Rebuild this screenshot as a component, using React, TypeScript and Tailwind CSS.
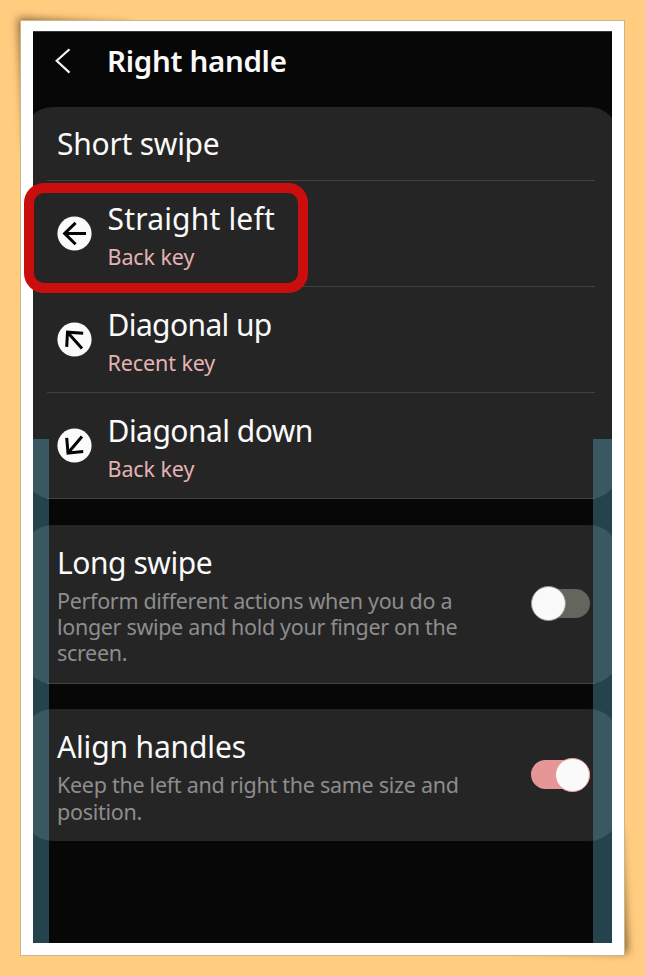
import React, { useState } from 'react';
import clsx from 'clsx';

type Direction = 'left' | 'up' | 'down';

interface SwipeAction {
  direction: Direction;
  title: string;
  action: string;
  titleClass: string;
}

const swipeActions: SwipeAction[] = [
  { direction: 'left', title: 'Straight left', action: 'Back key', titleClass: 'tracking-[0.18px]' },
  { direction: 'up', title: 'Diagonal up', action: 'Recent key', titleClass: 'tracking-[-0.62px]' },
  { direction: 'down', title: 'Diagonal down', action: 'Back key', titleClass: 'tracking-[-0.52px]' },
];

const arrowPaths: Record<Direction, string> = {
  left: 'M29 17.4H8M18.6 6.8L7.6 17.4L18.6 28.2',
  up: 'M25 26.4L10.5 10.2M26.2 11.2L10.5 10.2L9.7 24.8',
  down: 'M25 8.5L11 25M9.7 9.8L11 25L26.2 23.4',
};

const DirectionIcon: React.FC<{ direction: Direction }> = ({ direction }) => (
  <svg width="35" height="35" viewBox="0 0 35 35" className="mt-[35px] shrink-0">
    <circle cx="17.5" cy="17.5" r="17.1" fill="#fbfbfb" />
    <path d={arrowPaths[direction]} fill="none" stroke="#050505" strokeWidth="3" />
  </svg>
);

const Card: React.FC<{ children: React.ReactNode; className?: string }> = ({ children, className }) => (
  <section className={clsx('-ml-[10px] -mr-[7px] rounded-[30px] bg-[#252525] pl-[34px] pr-[28px]', className)}>
    {children}
  </section>
);

const Divider = () => <div className="-ml-[10px] -mr-[4px] h-px shrink-0 bg-[#414141]" />;

interface ToggleProps {
  checked: boolean;
  label: string;
  onChange: (checked: boolean) => void;
}

const Toggle: React.FC<ToggleProps> = ({ checked, label, onChange }) => (
  <button
    type="button"
    role="switch"
    aria-checked={checked}
    aria-label={label}
    onClick={() => onChange(!checked)}
    className={clsx(
      'mr-[1.5px] flex h-[29px] w-[58.5px] shrink-0 items-center rounded-full',
      checked ? 'justify-end bg-[#e69696]' : 'justify-start bg-[#64655e]'
    )}
  >
    <span
      className={clsx(
        'size-[34.5px] shrink-0 rounded-full border-[1.5px] bg-[#fafafa]',
        checked ? 'border-[#e69696]' : 'border-[#90908c]'
      )}
    />
  </button>
);

export default function App() {
  const [longSwipe, setLongSwipe] = useState(false);
  const [alignHandles, setAlignHandles] = useState(true);

  return (
    <div className="relative h-[976px] w-[645px] overflow-hidden bg-[#ffcc80] pl-[20px] pt-[20px] font-['Noto_Sans','Open_Sans',sans-serif]">
      {/* Lifted corner shadows */}
      <svg className="absolute inset-0" width="645" height="976">
        <g fill="#4d3510" fillOpacity="0.7" className="blur-[4px]">
          <polygon points="18,18 130,25 130,150 26,150" />
          <polygon points="628,953 620,830 515,830 515,949" />
        </g>
      </svg>

      {/* Photo frame */}
      <div className="relative h-[936px] w-[605px] border border-[#cdb58a] bg-white pl-[12px] pt-[10px]">
        <main className="relative flex h-[912px] w-[579px] flex-col overflow-hidden border-t border-[#3b3b3b] bg-[#070707] text-[#fafafa]">
          <header className="flex h-[74.5px] shrink-0 items-start pl-[22px]">
            <svg width="17" height="26" viewBox="0 0 17 26" className="mt-[16px]">
              <path d="M14.5 1.2L1.7 12.8L14.5 24.6" fill="none" stroke="#f5f5f5" strokeWidth="2.2" />
            </svg>
            <h1 className="ml-[35px] mt-[9px] whitespace-nowrap text-[29.5px] font-semibold leading-[40px] tracking-[-0.3px]">
              Right handle
            </h1>
          </header>

          <Card>
            <h2 className="h-[73px] whitespace-nowrap pt-[17px] text-[30px] leading-[40px] tracking-[-0.25px]">
              Short swipe
            </h2>
            {swipeActions.map((item) => (
              <React.Fragment key={item.title}>
                <Divider />
                <div className="flex h-[105.2px] items-start">
                  <DirectionIcon direction={item.direction} />
                  <div className="ml-[15.5px] whitespace-nowrap pt-[18px]">
                    <p className={clsx('text-[30px] leading-[40px]', item.titleClass)}>{item.title}</p>
                    <p className="mt-[3px] text-[21.5px] leading-[30px] tracking-[-0.1px] text-[#e3b3b3]">{item.action}</p>
                  </div>
                </div>
              </React.Fragment>
            ))}
            <Divider />
          </Card>

          <Card className="mt-[25.5px] flex h-[159px] flex-col">
            <div className="flex flex-1 items-center justify-between">
              <div className="h-[158px] whitespace-nowrap pt-[18px]">
                <h2 className="text-[30px] leading-[40px] tracking-[-0.45px]">Long swipe</h2>
                <p className="mt-[5px] text-[21.5px] leading-[26.4px] tracking-[-0.32px] text-[#8d8d8d]">
                  Perform different actions when you do a
                  <br />
                  longer swipe and hold your finger on the
                  <br />
                  screen.
                </p>
              </div>
              <Toggle label="Long swipe" checked={longSwipe} onChange={setLongSwipe} />
            </div>
            <Divider />
          </Card>

          <Card className="mt-[25.5px] flex h-[131.5px] items-center justify-between">
            <div className="h-[131px] whitespace-nowrap pt-[18px]">
              <h2 className="text-[30px] leading-[40px] tracking-[-0.15px]">Align handles</h2>
              <p className="mt-[5px] text-[21.5px] leading-[26.4px] tracking-[-0.28px] text-[#8d8d8d]">
                Keep the left and right the same size and
                <br />
                position.
              </p>
            </div>
            <Toggle label="Align handles" checked={alignHandles} onChange={setAlignHandles} />
          </Card>

          {/* Edge handles */}
          <div className="absolute bottom-0 left-0 top-[406.5px] w-[16px] bg-[#69d0f0]/30" />
          <div className="absolute bottom-0 right-0 top-[406.5px] w-[19px] bg-[#69d0f0]/30" />
        </main>
      </div>

      {/* Highlight around the first action */}
      <div className="absolute left-[23.5px] top-[182.5px] h-[110.5px] w-[284.5px] rounded-[20px] border-[10px] border-[#ca0e0e]" />
    </div>
  );
}
